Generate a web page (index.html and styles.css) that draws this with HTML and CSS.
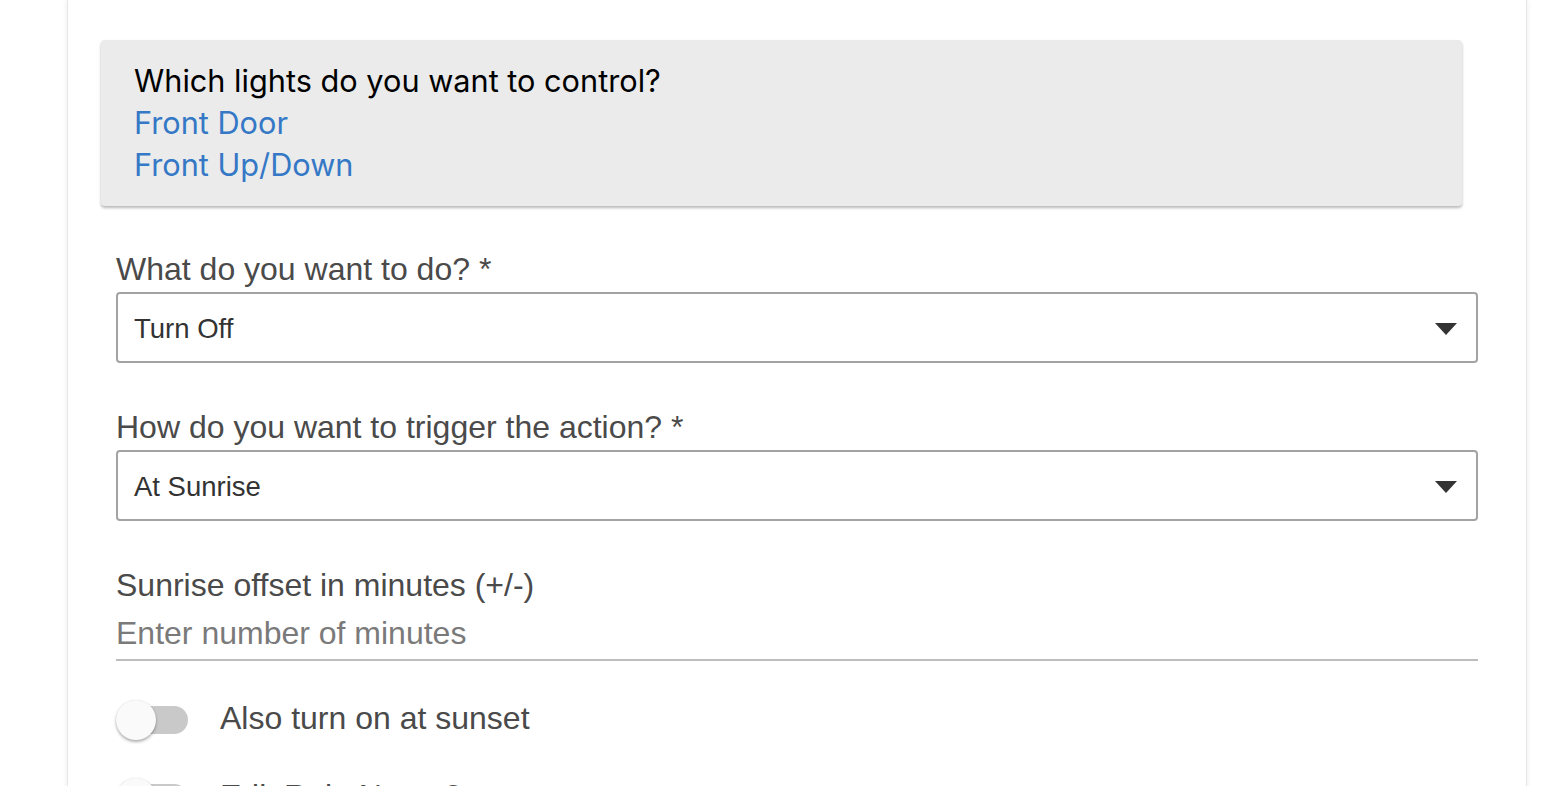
FILE: index.html
```html
<!DOCTYPE html>
<html lang="en">
<head>
<meta charset="utf-8">
<title>Rule</title>
<link rel="stylesheet" href="styles.css">
</head>
<body>
<div class="page">
  <div class="card">
    <div class="card-title">Which lights do you want to control?</div>
    <a class="card-link" href="#">Front Door</a>
    <a class="card-link" href="#">Front Up/Down</a>
  </div>

  <div class="form">
    <div class="field">
      <div class="label">What do you want to do? *</div>
      <div class="select">
        <span class="select-value">Turn Off</span>
        <svg class="caret" width="22" height="12" viewBox="0 0 22 12"><path d="M0 0 L22 0 L11 12 Z" fill="#333"/></svg>
      </div>
    </div>

    <div class="field">
      <div class="label">How do you want to trigger the action? *</div>
      <div class="select">
        <span class="select-value">At Sunrise</span>
        <svg class="caret" width="22" height="12" viewBox="0 0 22 12"><path d="M0 0 L22 0 L11 12 Z" fill="#333"/></svg>
      </div>
    </div>

    <div class="field field-last">
      <div class="label">Sunrise offset in minutes (+/-)</div>
      <input class="text-input" type="text" placeholder="Enter number of minutes">
    </div>

    <div class="toggles">
      <div class="toggle-row">
        <span class="switch"><span class="track"></span><span class="thumb"></span></span>
        <span class="toggle-label">Also turn on at sunset</span>
      </div>
      <div class="toggle-row">
        <span class="switch"><span class="track"></span><span class="thumb"></span></span>
        <span class="toggle-label">Edit Rule Name?</span>
      </div>
    </div>
  </div>
</div>
</body>
</html>
```

FILE: styles.css
```css
html, body {
  margin: 0;
  padding: 0;
  background: #ffffff;
  overflow: hidden;
}

.page {
  margin-left: 67px;
  width: 1460px;
  min-height: 900px;
  background: #ffffff;
  border-left: 1px solid #e6e6e6;
  border-right: 1px solid #e6e6e6;
  box-shadow: 0 0 6px rgba(0, 0, 0, 0.08);
  padding-top: 40px;
  box-sizing: border-box;
}

.card {
  margin: 0 64px 0 33px;
  padding: 20px 33px;
  background: #ebebeb;
  border-radius: 4px;
  box-shadow: 0 2px 3px rgba(0, 0, 0, 0.28);
  font-family: Inter, "Liberation Sans", sans-serif;
  font-size: 30.7px;
  line-height: 42px;
}

.card-title {
  color: #000;
}

.card-link {
  display: block;
  color: #3478c6;
  text-decoration: none;
}

.form {
  padding: 44px 48px 0 48px;
  font-family: "Liberation Sans", Arial, sans-serif;
}

.field {
  margin-bottom: 45px;
}

.field-last {
  margin-bottom: 20px;
}

.label {
  font-size: 32px;
  line-height: 38px;
  color: #4a4a4a;
  margin-bottom: 4px;
}

.select {
  height: 67px;
  border: 2px solid #a3a3a3;
  border-radius: 4px;
  display: flex;
  align-items: center;
  justify-content: space-between;
  padding: 0 19px 0 16px;
}

.select-value {
  font-size: 27.5px;
  color: #333;
  padding-top: 2px;
}

.caret {
  display: block;
  margin-top: 2px;
}

.text-input {
  display: block;
  width: 100%;
  box-sizing: border-box;
  border: none;
  border-bottom: 2px solid #bdbdbd;
  outline: none;
  background: transparent;
  padding: 6px 0 7px 0;
  height: 53px;
  margin: 0;
  font-family: "Liberation Sans", Arial, sans-serif;
  font-size: 32px;
  line-height: 38px;
  color: #333;
}

.text-input::placeholder {
  color: #7a7a7a;
  opacity: 1;
}

.toggle-row {
  height: 78px;
  display: flex;
  align-items: center;
  gap: 32px;
}

.switch {
  position: relative;
  width: 72px;
  height: 40px;
  flex: none;
}

.track {
  position: absolute;
  left: 6px;
  top: 6px;
  width: 66px;
  height: 28px;
  border-radius: 14px;
  background: #c9c9c9;
}

.thumb {
  position: absolute;
  left: 0;
  top: 0;
  width: 40px;
  height: 40px;
  border-radius: 50%;
  background: #fafafa;
  box-shadow: 0 2px 3px rgba(0, 0, 0, 0.3), 0 0 1px rgba(0, 0, 0, 0.15);
}

.toggle-label {
  font-size: 32px;
  line-height: 38px;
  color: #4a4a4a;
  padding-bottom: 5px;
}
```
